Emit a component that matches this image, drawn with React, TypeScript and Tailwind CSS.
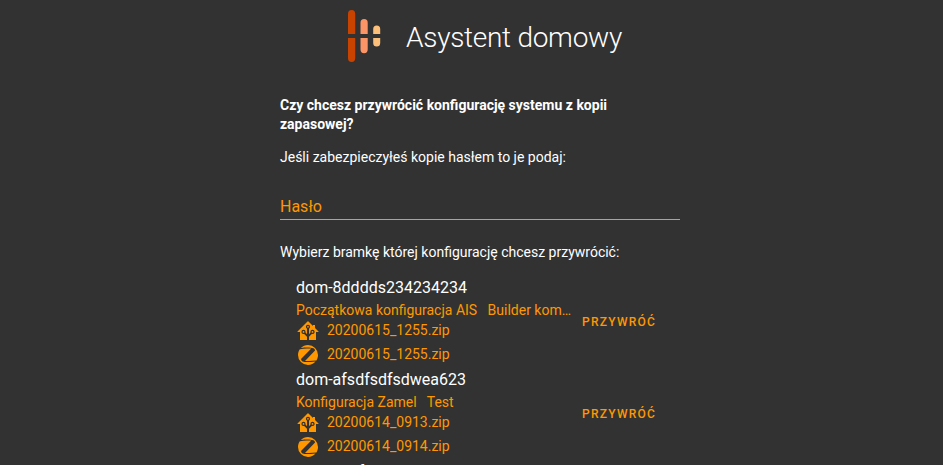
import React from "react";

const HOME =
  "M21.8,13H20V21H13V17.67L15.79,14.88L16.5,15C17.66,15 18.6,14.06 18.6,12.9C18.6,11.74 17.66,10.8 16.5,10.8A2.1,2.1 0 0,0 14.4,12.9L14.5,13.61L13,15.13V9.65C13.66,9.29 14.1,8.6 14.1,7.8A2.1,2.1 0 0,0 12,5.7A2.1,2.1 0 0,0 9.9,7.8C9.9,8.6 10.34,9.29 11,9.65V15.13L9.5,13.61L9.6,12.9A2.1,2.1 0 0,0 7.5,10.8A2.1,2.1 0 0,0 5.4,12.9A2.1,2.1 0 0,0 7.5,15L8.21,14.88L11,17.67V21H4V13H2.25C1.83,13 1.42,13 1.42,12.79C1.43,12.57 1.85,12.15 2.28,11.72L11,3C11.33,2.67 11.67,2.33 12,2.33C12.33,2.33 12.67,2.67 13,3L17,7V6H19V9L21.78,11.78C22.18,12.18 22.59,12.59 22.6,12.8C22.6,13 22.2,13 21.8,13M7.5,12A0.9,0.9 0 0,1 8.4,12.9A0.9,0.9 0 0,1 7.5,13.8A0.9,0.9 0 0,1 6.6,12.9A0.9,0.9 0 0,1 7.5,12M16.5,12C17,12 17.4,12.4 17.4,12.9C17.4,13.4 17,13.8 16.5,13.8A0.9,0.9 0 0,1 15.6,12.9A0.9,0.9 0 0,1 16.5,12M12,6.9C12.5,6.9 12.9,7.3 12.9,7.8C12.9,8.3 12.5,8.7 12,8.7C11.5,8.7 11.1,8.3 11.1,7.8C11.1,7.3 11.5,6.9 12,6.9Z";
const ZIGBEE =
  "M4.06,6.15C3.97,6.17 3.88,6.22 3.8,6.28C2.66,7.9 2,9.87 2,12A10,10 0 0,0 12,22C15,22 17.68,20.68 19.5,18.6L17,18.85C14.25,19.15 11.45,19.19 8.66,18.96C7.95,18.94 7.24,18.76 6.59,18.45C5.73,18.06 5.15,17.23 5.07,16.29C5.06,16.13 5.12,16 5.23,15.87L7.42,13.6L15.03,5.7V5.6H10.84C8.57,5.64 6.31,5.82 4.06,6.15M20.17,17.5C20.26,17.47 20.35,17.44 20.43,17.39C21.42,15.83 22,14 22,12A10,10 0 0,0 12,2C9.22,2 6.7,3.13 4.89,4.97H5.17C8.28,4.57 11.43,4.47 14.56,4.65C15.5,4.64 16.45,4.82 17.33,5.17C18.25,5.53 18.89,6.38 19,7.37C19,7.53 18.93,7.7 18.82,7.82L9.71,17.19L9,17.95V18.06H13.14C15.5,18 17.84,17.81 20.17,17.5Z";

type Gate = { name: string; info: string; home: string; zigbee: string };

const gates: Gate[] = [
  {
    name: "dom-8dddds234234234",
    info: "Początkowa konfiguracja AIS \u00a0 Builder kom…",
    home: "20200615_1255.zip",
    zigbee: "20200615_1255.zip",
  },
  {
    name: "dom-afsdfsdfsdwea623",
    info: "Konfiguracja Zamel \u00a0 Test",
    home: "20200614_0913.zip",
    zigbee: "20200614_0914.zip",
  },
];

function Logo() {
  return (
    <svg className="h-[52px] w-[34px]" viewBox="0 0 34 52">
      <path fill="#c84300" d="M0 24V4a3.600 3.900 0 0 1 7.200 0v20zM0 28v20a3.600 3.900 0 0 0 7.200 0V28z" />
      <path fill="#fb9466" d="M12.500 24V12.700a3.600 3.700 0 0 1 7.200 0V24zM12.500 28v11.500a3.600 3.700 0 0 0 7.200 0V28z" />
      <path fill="#fdc07a" d="M25.200 24v-5a3.500 3.600 0 0 1 7 0v5zM25.200 28v5a3.500 3.600 0 0 0 7 0v-5z" />
    </svg>
  );
}

function Backup({ icon, file }: { icon: string; file: string }) {
  return (
    <div className="flex h-6 items-center gap-[7px]">
      <svg className="mt-0.5 size-6 shrink-0 fill-current" viewBox="0 0 24 24">
        <path d={icon} />
      </svg>
      <span className="leading-5">{file}</span>
    </div>
  );
}

function GateRow({ gate }: { gate: Gate }) {
  return (
    <div className="flex h-[92px] shrink-0 items-start pl-4">
      <div className="w-[275px] shrink-0">
        <div className="h-6 pt-px text-base leading-6">{gate.name}</div>
        <div className="text-sm text-[#ff9800]">
          <div className="h-[19px] whitespace-nowrap leading-[22px]">{gate.info}</div>
          <Backup icon={HOME} file={gate.home} />
          <Backup icon={ZIGBEE} file={gate.zigbee} />
        </div>
      </div>
      <button className="ml-[11px] mt-0.5 self-center text-xs font-medium tracking-[1.25px] text-[#ff9800]">
        PRZYWRÓĆ
      </button>
    </div>
  );
}

export default function App() {
  return (
    <div className="flex h-[465px] w-full flex-col overflow-hidden bg-[#323232] font-[Roboto,sans-serif] text-white">
      <header className="flex h-[72px] shrink-0 items-center gap-6 pl-[348px]">
        <Logo />
        <h1 className="mt-1 text-[28px] font-light leading-8 tracking-[-0.01em]">Asystent domowy</h1>
      </header>
      <main className="ml-[280px] flex w-[400px] flex-col text-sm">
        <p className="mt-6 pr-8 font-bold leading-[19px]">
          Czy chcesz przywrócić konfigurację systemu z kopii zapasowej?
        </p>
        <p className="mt-[13px] leading-5">Jeśli zabezpieczyłeś kopie hasłem to je podaj:</p>
        <div className="mt-7 flex h-[25px] items-center border-b border-[#ff9800] text-base text-[#ff9800]">
          Hasło
        </div>
        <p className="mt-[22px] leading-5">Wybierz bramkę której konfigurację chcesz przywrócić:</p>
        <div className="mt-[13px] flex flex-col">
          {gates.map((gate) => (
            <GateRow key={gate.name} gate={gate} />
          ))}
          <div className="h-6 pl-4 pt-px text-base leading-6">dom-asdf</div>
        </div>
      </main>
    </div>
  );
}
